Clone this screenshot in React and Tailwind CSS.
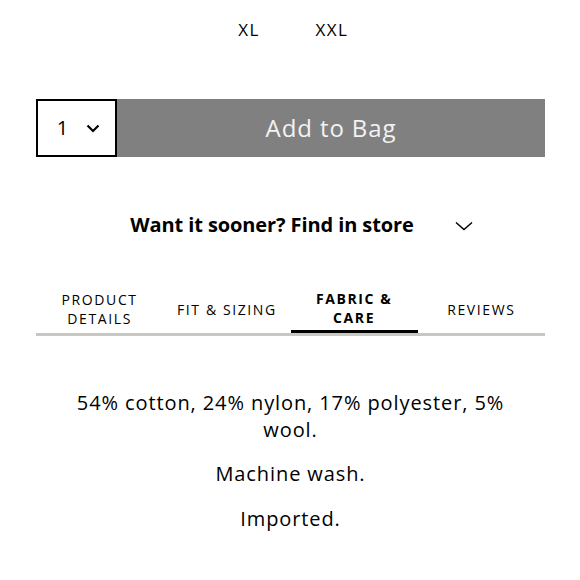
import React from "react";

export default function App() {
  const font = { fontFamily: "'Open Sans', Lato, sans-serif" };
  return (
    <div className="w-[580px] h-[580px] bg-white text-black overflow-hidden" style={font}>
      <div className="mx-[36px] w-[509px]">
        <div className="flex justify-center pt-[18px] h-[99px]">
          <div className="w-[83px] text-center text-[17px] tracking-[1.5px] leading-[24px]">XL</div>
          <div className="w-[83px] text-center text-[17px] tracking-[1.5px] leading-[24px]">XXL</div>
        </div>
        <div className="flex h-[58px]">
          <div className="w-[81px] border-2 border-black flex items-center justify-center gap-[18px] pl-[4px]">
            <span className="text-[20px] leading-none">1</span>
            <svg width="14" height="9" viewBox="0 0 14 9" fill="none">
              <path d="M1.5 1.5 L7 7 L12.5 1.5" stroke="black" strokeWidth="2.2" />
            </svg>
          </div>
          <div className="flex-1 bg-[#808080] flex items-center justify-center text-[#f2f2f2] text-[24px] tracking-[0.9px]">
            Add to Bag
          </div>
        </div>
        <div className="flex items-center justify-center mt-[50px] h-[36px] relative pr-[37px]">
          <span className="text-[20px] font-bold tracking-[-0.1px]">Want it sooner? Find in store</span>
          <svg className="absolute left-[419px] top-[14px]" width="18" height="10" viewBox="0 0 18 10" fill="none">
            <path d="M1 1.5 L9 8.5 L17 1.5" stroke="black" strokeWidth="1.5" />
          </svg>
        </div>
        <div className="grid grid-cols-4 mt-[46px] border-b-[3px] border-[#c8c8c2]">
          <div className="flex items-center justify-center text-center text-[14px] tracking-[1.6px] leading-[19px] h-[44px] pb-[4px]">PRODUCT<br />DETAILS</div>
          <div className="flex items-center justify-center text-center text-[14px] tracking-[1.6px] leading-[19px] h-[44px] pb-[4px]">FIT &amp; SIZING</div>
          <div className="flex items-center justify-center text-center text-[14px] font-bold tracking-[1.6px] leading-[19px] h-[44px] pb-[4px] border-b-[3px] border-black -mb-[3px]">FABRIC &amp;<br />CARE</div>
          <div className="flex items-center justify-center text-center text-[14px] tracking-[1.6px] leading-[19px] h-[44px] pb-[4px]">REVIEWS</div>
        </div>
        <div className="mt-[53px] text-center text-[20px] leading-[27px] tracking-[0.9px]">
          <p className="mx-auto w-[440px]">54% cotton, 24% nylon, 17% polyester, 5% wool.</p>
          <p className="mt-[17px]">Machine wash.</p>
          <p className="mt-[18px]">Imported.</p>
        </div>
      </div>
    </div>
  );
}
